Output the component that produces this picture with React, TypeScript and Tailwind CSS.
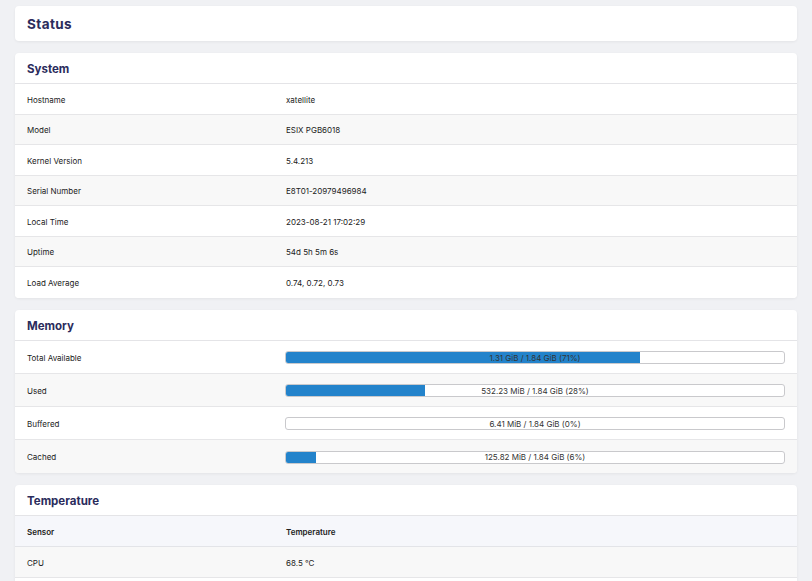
import React from 'react';

const systemRows: [string, string][] = [
  ['Hostname', 'xatellite'],
  ['Model', 'ESIX PGB6018'],
  ['Kernel Version', '5.4.213'],
  ['Serial Number', 'E8T01-20979496984'],
  ['Local Time', '2023-08-21 17:02:29'],
  ['Uptime', '54d 5h 5m 6s'],
  ['Load Average', '0.74, 0.72, 0.73'],
];

const memoryRows: { label: string; text: string; pct: number }[] = [
  { label: 'Total Available', text: '1.31 GiB / 1.84 GiB (71%)', pct: 71 },
  { label: 'Used', text: '532.23 MiB / 1.84 GiB (28%)', pct: 28 },
  { label: 'Buffered', text: '6.41 MiB / 1.84 GiB (0%)', pct: 0 },
  { label: 'Cached', text: '125.82 MiB / 1.84 GiB (6%)', pct: 6 },
];

const Card: React.FC<{ title: string; children?: React.ReactNode }> = ({ title, children }) => (
  <div className="bg-white rounded-[4px] shadow-[0_1px_3px_rgba(0,0,0,0.06)] overflow-hidden">
    <div className="h-[31px] flex items-center px-3 pt-[4px] border-b border-[#e4e4e7]">
      <h2 className="text-[11.5px] font-bold text-[#2b2c5c]">{title}</h2>
    </div>
    {children}
  </div>
);

const Bar: React.FC<{ text: string; pct: number }> = ({ text, pct }) => (
  <div className="relative h-[13px] w-full rounded-[3px] border border-[#c9c9cc] bg-white overflow-hidden">
    <div className="h-full bg-[#2383cb]" style={{ width: `${pct}%` }} />
    <span className="absolute inset-0 flex items-center justify-center text-[8px] text-[#333]">{text}</span>
  </div>
);

export default function App() {
  return (
    <div
      className="min-h-screen bg-[#f0f1f4] pl-[15px] pr-[15px] pt-[6px] pb-6 flex flex-col gap-3 text-[#222]"
      style={{ fontFamily: 'Inter, "Noto Sans", sans-serif' }}
    >
      <div className="bg-white rounded-[4px] shadow-[0_1px_3px_rgba(0,0,0,0.06)] h-[35px] flex items-center px-3 pt-[2px]">
        <h1 className="text-[13.5px] font-bold tracking-[0.4px] text-[#2b2c5c]">Status</h1>
      </div>

      <Card title="System">
        {systemRows.map(([k, v], i) => (
          <div
            key={k}
            className={`flex items-center h-[30.5px] pt-[2px] text-[8px] ${i % 2 ? 'bg-[#f8f8f8]' : 'bg-white'} ${i < systemRows.length - 1 ? 'border-b border-[#e6e6e8]' : ''}`}
          >
            <div className="w-[271px] pl-3">{k}</div>
            <div>{v}</div>
          </div>
        ))}
      </Card>

      <Card title="Memory">
        {memoryRows.map((r, i) => (
          <div
            key={r.label}
            className={`flex items-center h-[33px] pt-[2px] text-[8px] pr-3 ${i % 2 ? 'bg-[#f8f8f8]' : 'bg-white'} ${i < memoryRows.length - 1 ? 'border-b border-[#e6e6e8]' : ''}`}
          >
            <div className="w-[270px] pl-3 shrink-0">{r.label}</div>
            <div className="flex-1">
              <Bar text={r.text} pct={r.pct} />
            </div>
          </div>
        ))}
      </Card>

      <Card title="Temperature">
        <div className="flex items-center h-[31px] pt-[3px] text-[8px] font-semibold bg-[#f6f7fb] border-b border-[#e3e4e8]">
          <div className="w-[271px] pl-3">Sensor</div>
          <div>Temperature</div>
        </div>
        <div className="flex items-center h-[31px] pt-[3px] text-[8px] bg-[#f8f8f8] border-b border-[#e6e6e8]">
          <div className="w-[271px] pl-3">CPU</div>
          <div>68.5 °C</div>
        </div>
        <div className="h-[30px] bg-white" />
      </Card>
    </div>
  );
}
